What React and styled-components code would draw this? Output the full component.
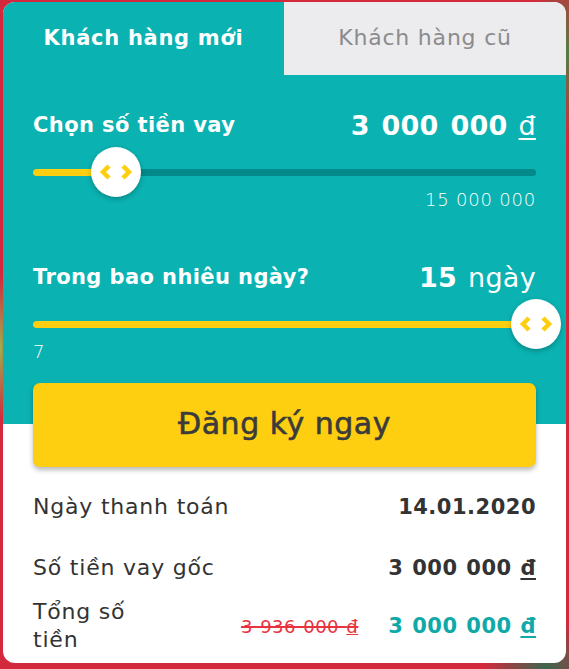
import styled, { createGlobalStyle } from 'styled-components';

const GlobalStyle = createGlobalStyle`
	html, body {
		margin: 0;
		padding: 0;
	}
	body {
		width: 569px;
		height: 669px;
		overflow: hidden;
		font-family: 'DejaVu Sans', 'Liberation Sans', sans-serif;
		background:
			radial-gradient(ellipse 60px 120px at 100% 8%, rgba(60, 140, 70, 0.85), transparent 70%),
			radial-gradient(ellipse 90px 70px at 96% 100%, rgba(40, 110, 80, 0.9), transparent 70%),
			radial-gradient(ellipse 20px 90px at 0% 52%, rgba(150, 190, 80, 0.9), transparent 80%),
			#d3293d;
	}
`;

const Card = styled.div`
	margin: 2px 3px 0;
	width: 563px;
	height: 661px;
	background: #fff;
	border-radius: 12px;
	overflow: hidden;
	display: flex;
	flex-direction: column;
`;

const Tabs = styled.div`
	display: grid;
	grid-template-columns: 281px 1fr;
	height: 73px;
`;

const Tab = styled.div`
	display: flex;
	align-items: center;
	justify-content: center;
	font-size: ${(p) => (p.active ? 21 : 22)}px;
	letter-spacing: ${(p) => (p.active ? 0.7 : 0.8)}px;
	font-weight: ${(p) => (p.active ? 700 : 400)};
	color: ${(p) => (p.active ? '#fff' : '#8b8b8d')};
	background: ${(p) => (p.active ? '#0ab2b1' : '#ececee')};
	padding-bottom: 2px;
`;

const Panel = styled.div`
	background: linear-gradient(to bottom, #0ab2b1 calc(100% - 43px), #fff 0);
	padding: 0 30px;
	display: flex;
	flex-direction: column;
`;

const HeadRow = styled.div`
	display: flex;
	align-items: center;
	justify-content: space-between;
	height: 40px;
	margin-top: ${(p) => p.top}px;
	color: #fff;
`;

const Label = styled.span`
	font-size: 21px;
	font-weight: 700;
	letter-spacing: 0.4px;
`;

const Amount = styled.span`
	font-size: 27px;
	font-weight: 400;
	word-spacing: 2px;
	letter-spacing: 0.3px;
	b {
		font-weight: 700;
	}
	u {
		text-decoration-thickness: 2px;
		text-underline-offset: 3px;
	}
`;

const SliderBox = styled.div`
	position: relative;
	height: 30px;
	margin-top: 12px;
	display: flex;
	align-items: center;
`;

const Track = styled.div`
	width: 100%;
	height: 7px;
	border-radius: 4px;
	background: #04898b;
`;

const Fill = styled.div`
	height: 100%;
	border-radius: 4px;
	background: #fecf10;
`;

const Thumb = styled.div`
	position: absolute;
	top: 50%;
	width: 50px;
	height: 50px;
	margin: -25px 0 0 -25px;
	border-radius: 50%;
	background: #fff;
	box-shadow: 0 2px 5px rgba(0, 0, 0, 0.25);
	display: flex;
	align-items: center;
	justify-content: center;
`;

const Hint = styled.div`
	height: 26px;
	line-height: 26px;
	font-size: 18px;
	font-weight: 200;
	letter-spacing: 0.8px;
	color: #fff;
	text-align: ${(p) => p.align};
`;

const Button = styled.button`
	margin-top: 18px;
	height: 84px;
	border: none;
	border-radius: 7px;
	background: #fecf10;
	box-shadow: 0 3px 5px rgba(0, 0, 0, 0.28);
	font-family: inherit;
	font-size: 30px;
	font-weight: 400;
	letter-spacing: 0.5px;
	color: #3b3b3b;
	-webkit-text-stroke: 0.6px #3b3b3b;
	cursor: pointer;
	padding: 0 0 4px;
`;

const List = styled.div`
	padding: 20px 30px 0;
	display: flex;
	flex-direction: column;
`;

const InfoRow = styled.div`
	display: flex;
	align-items: center;
	justify-content: space-between;
	gap: 30px;
	min-height: 40px;
	margin-top: ${(p) => p.top || 0}px;
	color: #333;
`;

const InfoLabel = styled.span`
	font-size: 22px;
	line-height: 28px;
	letter-spacing: 0.8px;
	max-width: ${(p) => (p.narrow ? '125px' : 'none')};
	margin-right: auto;
`;

const InfoValue = styled.span`
	font-size: 21px;
	font-weight: 700;
	word-spacing: 1px;
	letter-spacing: 0.5px;
	color: ${(p) => p.color || '#333'};
	u {
		text-decoration-thickness: 2px;
		text-underline-offset: 3px;
	}
`;

const OldPrice = styled.span`
	font-size: 18px;
	word-spacing: 1px;
	letter-spacing: 0.5px;
	color: #e8343f;
	text-decoration: line-through;
	text-decoration-thickness: 1.5px;
	u {
		text-decoration: underline line-through;
	}
`;

function Arrows() {
	return (
		<svg width="32" height="16" viewBox="0 0 32 16">
			<path
				d="M9 2 L3 8 L9 14 M23 2 L29 8 L23 14"
				fill="none"
				stroke="#fecf10"
				strokeWidth="4.5"
			/>
		</svg>
	);
}

function Slider({ pct }) {
	return (
		<SliderBox>
			<Track>
				<Fill style={{ width: `${pct}%` }} />
			</Track>
			<Thumb style={{ left: `${pct}%` }}>
				<Arrows />
			</Thumb>
		</SliderBox>
	);
}

export default function App() {
	return (
		<>
			<GlobalStyle />
			<Card>
				<Tabs>
					<Tab active>Khách hàng mới</Tab>
					<Tab>Khách hàng cũ</Tab>
				</Tabs>
				<Panel>
					<HeadRow top={30}>
						<Label>Chọn số tiền vay</Label>
						<Amount>
							<b>3 000 000</b> <u>đ</u>
						</Amount>
					</HeadRow>
					<Slider pct={16.5} />
					<Hint align="right">15 000 000</Hint>
					<HeadRow top={44}>
						<Label>Trong bao nhiêu ngày?</Label>
						<Amount>
							<b>15</b> ngày
						</Amount>
					</HeadRow>
					<Slider pct={100} />
					<Hint align="left">7</Hint>
					<Button>Đăng ký ngay</Button>
				</Panel>
				<List>
					<InfoRow>
						<InfoLabel>Ngày thanh toán</InfoLabel>
						<InfoValue>14.01.2020</InfoValue>
					</InfoRow>
					<InfoRow top={21}>
						<InfoLabel>Số tiền vay gốc</InfoLabel>
						<InfoValue>
							3 000 000 <u>đ</u>
						</InfoValue>
					</InfoRow>
					<InfoRow top={10}>
						<InfoLabel narrow>Tổng số tiền</InfoLabel>
						<OldPrice>
							3 936 000 <u>đ</u>
						</OldPrice>
						<InfoValue color="#0ea9a8">
							3 000 000 <u>đ</u>
						</InfoValue>
					</InfoRow>
				</List>
			</Card>
		</>
	);
}
